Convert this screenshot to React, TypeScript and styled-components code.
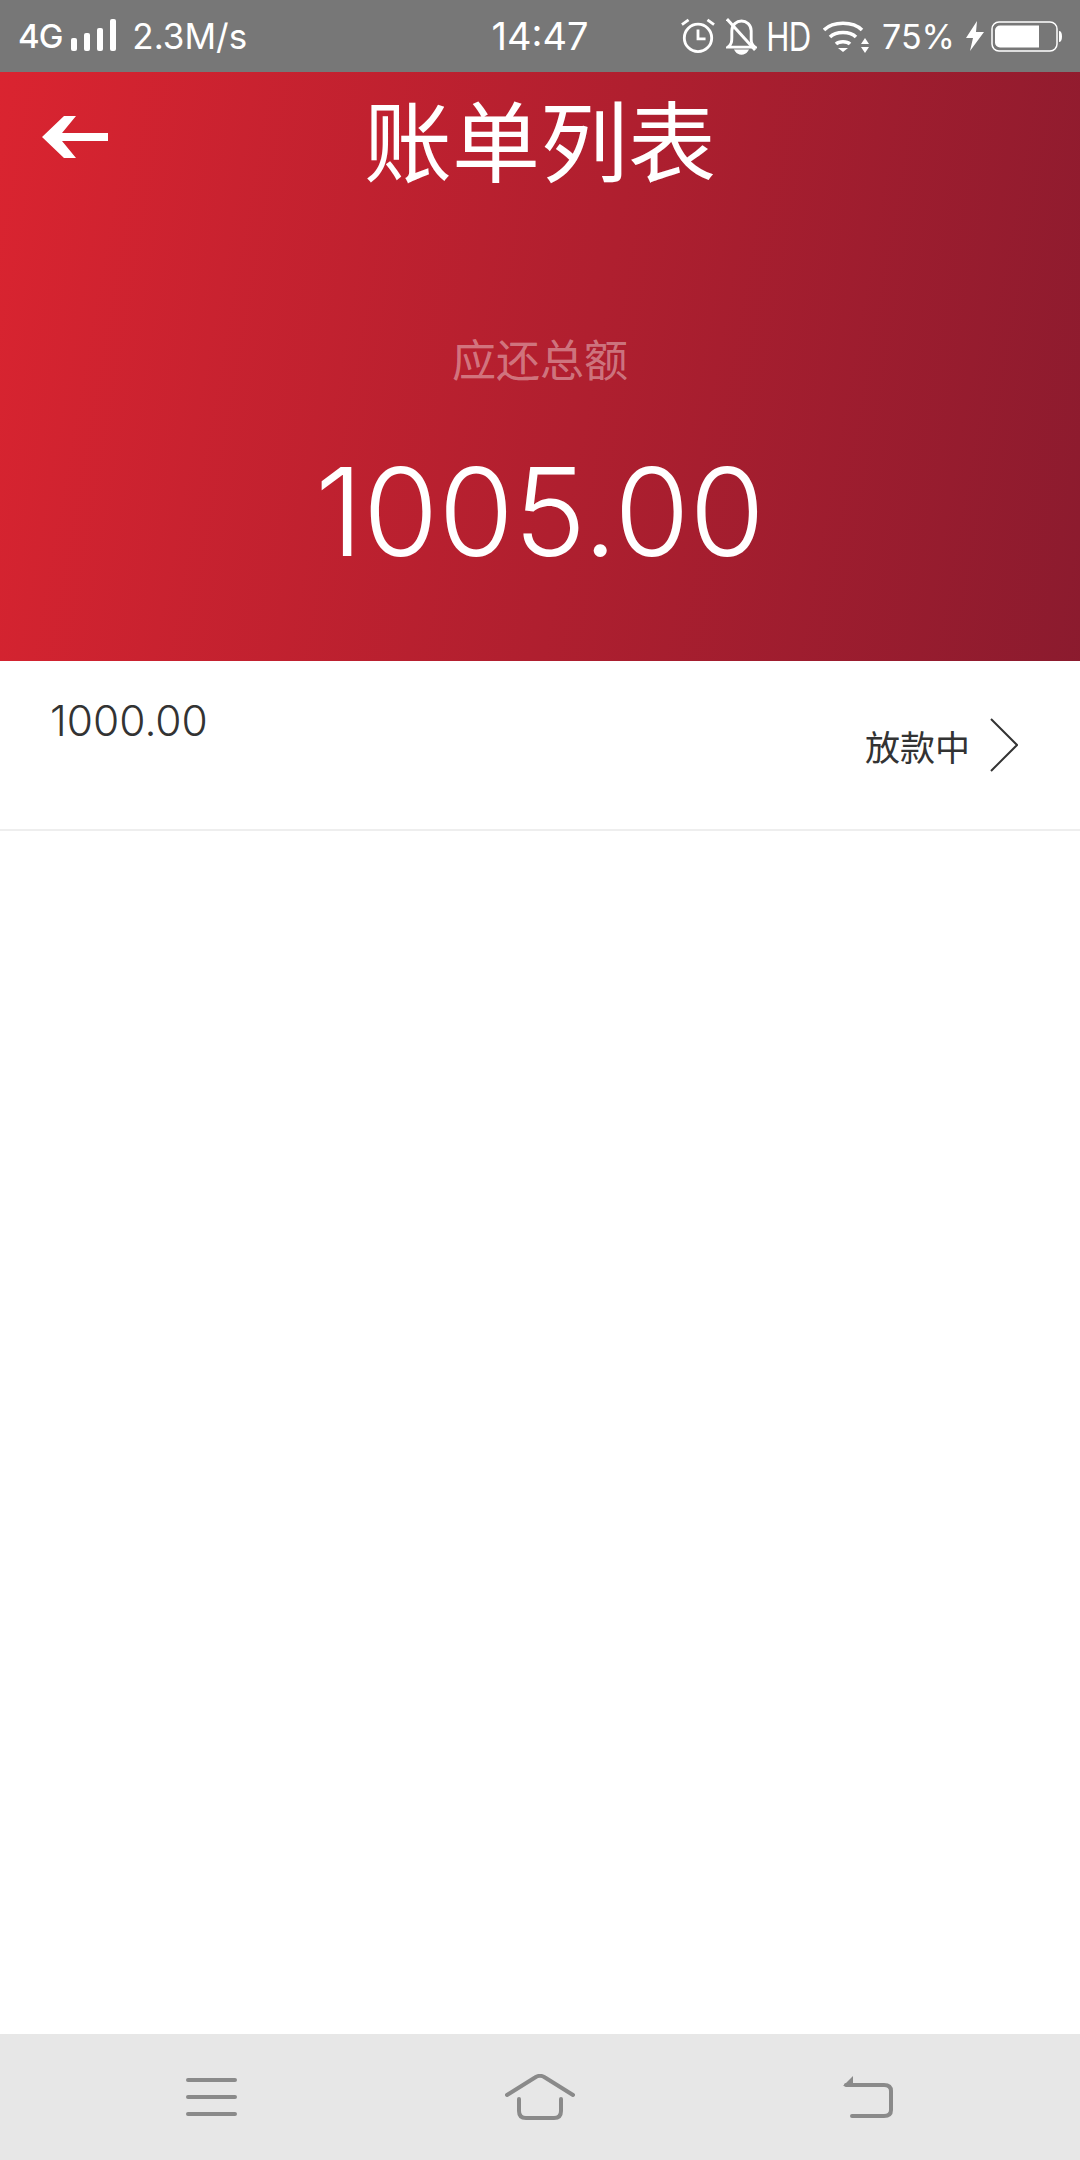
import React from "react";
import styled, { createGlobalStyle } from "styled-components";

const GlobalStyle = createGlobalStyle`
  html, body {
    margin: 0;
    padding: 0;
    background: #fff;
  }
  * {
    box-sizing: border-box;
  }
`;

const Screen = styled.div`
  width: 1080px;
  height: 2160px;
  display: flex;
  flex-direction: column;
  overflow: hidden;
  background: #fff;
  font-family: Inter, "Noto Sans CJK SC", sans-serif;
`;

const StatusBar = styled.div`
  height: 72px;
  flex: none;
  display: grid;
  grid-template-columns: 1fr auto 1fr;
  align-items: center;
  padding: 0 18px;
  background: #777777;
  color: #fff;
`;

const StatusLeft = styled.div`
  display: flex;
  align-items: center;
`;

const StatusRight = styled.div`
  display: flex;
  align-items: center;
  justify-content: flex-end;
`;

const NetType = styled.span`
  font-size: 33px;
  font-weight: 500;
  letter-spacing: -1px;
  margin-right: 9px;
`;

const Speed = styled.span`
  font-size: 35px;
  margin-left: 15px;
`;

const Clock = styled.span`
  font-size: 38px;
`;

const HdText = styled.span`
  font-size: 40px;
  letter-spacing: -1px;
  transform: scaleX(0.78);
  margin: 0 6px 0 3px;
`;

const Percent = styled.span`
  font-size: 34px;
  margin: 0 11px 0 13px;
`;

const Hero = styled.header`
  height: 589px;
  flex: none;
  display: flex;
  flex-direction: column;
  align-items: center;
  background: linear-gradient(100deg, #da2430 0%, #851a2e 108%);
  color: #fff;
`;

const TopRow = styled.div`
  width: 100%;
  display: grid;
  grid-template-columns: 1fr auto 1fr;
  align-items: center;
  padding: 21px 42px 0;
`;

const BackIcon = styled.svg`
  margin-top: -12px;
`;

const Title = styled.h1`
  margin: 0;
  font-size: 88px;
  font-weight: 400;
  line-height: 100px;
`;

const SubLabel = styled.div`
  margin-top: 140px;
  font-size: 44px;
  line-height: 56px;
  font-weight: 400;
  color: rgba(255, 255, 255, 0.4);
`;

const Total = styled.div`
  margin-top: 48px;
  font-size: 122px;
  line-height: 150px;
  font-weight: 300;
`;

const BillRow = styled.div`
  height: 170px;
  flex: none;
  display: flex;
  justify-content: space-between;
  padding: 32px 62px 0 50px;
  border-bottom: 2px solid #eeeeee;
`;

const Amount = styled.span`
  font-size: 42.500px;
  line-height: 56px;
  font-weight: 300;
  color: #333;
`;

const StatusCell = styled.div`
  display: flex;
  align-items: center;
  height: 56px;
  margin-top: 24px;
  gap: 20px;
`;

const StatusText = styled.span`
  font-size: 35px;
  font-weight: 400;
  color: #333;
`;

const Spacer = styled.div`
  flex: 1;
`;

const NavBar = styled.nav`
  height: 126px;
  flex: none;
  display: grid;
  grid-template-columns: repeat(3, 328px);
  justify-content: center;
  align-items: center;
  justify-items: center;
  background: #e7e7e7;
`;

export default function App() {
  return (
    <>
      <GlobalStyle />
      <Screen>
        <StatusBar>
          <StatusLeft>
            <NetType>4G</NetType>
            <svg width="46" height="34" viewBox="0 0 46 34" fill="#fff">
              <rect x="0" y="19" width="6" height="13" rx="2" />
              <rect x="13" y="14" width="6" height="18" rx="2" />
              <rect x="26" y="9" width="6" height="23" rx="2" />
              <rect x="39" y="0" width="6" height="32" rx="2" />
            </svg>
            <Speed>2.3M/s</Speed>
          </StatusLeft>
          <Clock>14:47</Clock>
          <StatusRight>
            <svg width="34" height="36" viewBox="0 0 36 38" fill="none" stroke="#fff" strokeWidth="3" style={{ marginRight: 11 }}>
              <circle cx="18" cy="21" r="14.5" />
              <path d="M18 12v10h8M1 7l7-5M35 7l-7-5" />
            </svg>
            <svg width="31" height="37" viewBox="0 0 32 38" fill="none" stroke="#fff" strokeWidth="3">
              <path d="M2 30c4-3 4-6 4-10V13c0-6 5-10 10-10s10 4 10 10v9c0 4 1 6 4 8H2z" />
              <path d="M1 1l29 32" />
              <path d="M11 34c2 3 8 3 10 0z" fill="#fff" />
            </svg>
            <HdText>HD</HdText>
            <svg width="46" height="34" viewBox="0 0 46 34" fill="none" stroke="#fff" strokeWidth="3.5">
              <path d="M1 11C10 2 30 2 39 11M7 18c6-6 20-6 26 0M13 25c3-3 11-3 14 0" />
              <path d="M15 29h10l-5 4z" fill="#fff" stroke="none" />
              <path d="M42 19l4 6h-8zM42 34l4-6h-8z" fill="#fff" stroke="none" />
            </svg>
            <Percent>75%</Percent>
            <svg width="18" height="30" viewBox="0 0 18 30" fill="#fff" style={{ marginRight: 7 }}>
              <path d="M11 0L0 17h7L4 30 18 11h-8z" />
            </svg>
            <svg width="71" height="31" viewBox="0 0 71 31" fill="none">
              <rect x="1" y="1" width="65" height="29" rx="7" stroke="#fff" strokeWidth="1.500" />
              <path d="M9 4.500h39v22H9a5 5 0 0 1-5-5v-12a5 5 0 0 1 5-5z" fill="#fff" />
              <path d="M68 10c2 0 3 2 3 5.500s-1 5.500-3 5.500z" fill="#fff" />
            </svg>
          </StatusRight>
        </StatusBar>

        <Hero>
          <TopRow>
            <BackIcon width="66" height="42" viewBox="0 0 66 42" fill="#fff">
              <path d="M22 0h12L20 17h46v8H20l14 17H22L0 21z" />
            </BackIcon>
            <Title>账单列表</Title>
            <span />
          </TopRow>
          <SubLabel>应还总额</SubLabel>
          <Total>1005.00</Total>
        </Hero>

        <BillRow>
          <Amount>1000.00</Amount>
          <StatusCell>
            <StatusText>放款中</StatusText>
            <svg width="28" height="54" viewBox="0 0 28 54" fill="none" stroke="#333" strokeWidth="2">
              <path d="M1 1l26 26L1 53" />
            </svg>
          </StatusCell>
        </BillRow>

        <Spacer />

        <NavBar>
          <svg width="52" height="40" viewBox="0 0 52 40" fill="none" stroke="#8a8a8a" strokeWidth="4" strokeLinecap="round">
            <path d="M2 3h47M2 20h47M2 37h47" />
          </svg>
          <svg width="70" height="46" viewBox="0 0 70 46" fill="none" stroke="#8a8a8a" strokeWidth="4" strokeLinecap="round">
            <path d="M2 21L30 3.500c3-2 7-2 10 0L68 21" />
            <path d="M14 25v12c0 5 3 7 7 7h28c4 0 7-2 7-7V25" />
          </svg>
          <svg width="52" height="44" viewBox="0 0 52 44" fill="none" stroke="#8a8a8a" strokeWidth="4" strokeLinecap="round">
            <path d="M4 10h38c5 0 7 2 7 6v19c0 4-2 6-7 6H10" />
            <path d="M1 11L11 1v10z" fill="#8a8a8a" stroke="none" />
          </svg>
        </NavBar>
      </Screen>
    </>
  );
}
